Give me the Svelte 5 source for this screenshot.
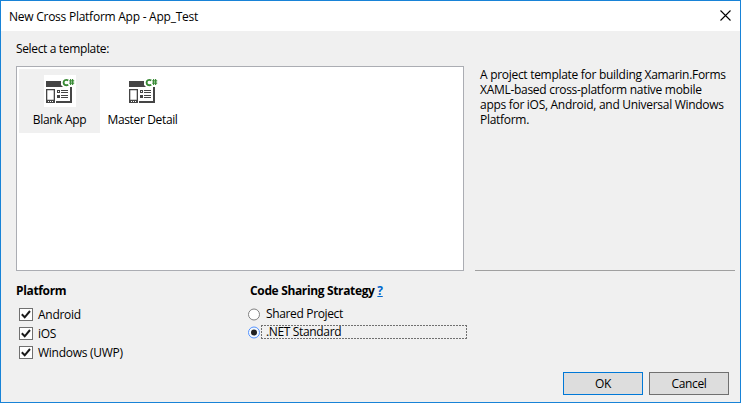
<script>
  const templates = [
    { id: 'blank', name: 'Blank App' },
    { id: 'master', name: 'Master Detail' }
  ];

  const description = [
    'A project template for building Xamarin.Forms',
    'XAML-based cross-platform native mobile',
    'apps for iOS, Android, and Universal Windows',
    'Platform.'
  ];

  let platforms = $state([
    { id: 'android', name: 'Android', checked: true },
    { id: 'ios', name: 'iOS', checked: true },
    { id: 'uwp', name: 'Windows (UWP)', checked: true }
  ]);

  const strategies = [
    { id: 'shared', name: 'Shared Project' },
    { id: 'standard', name: '.NET Standard' }
  ];

  let selectedTemplate = $state('blank');
  let strategy = $state('standard');
</script>

<div class="dialog">
  <header>
    <h1>New Cross Platform App - App_Test</h1>
    <button class="close" aria-label="Close">
      <svg width="11" height="11" viewBox="0 0 11 11">
        <path d="M0.5 0.5L10.5 10.5M10.5 0.5L0.5 10.5" stroke="#000" stroke-width="1.1" />
      </svg>
    </button>
  </header>

  <main>
    <p class="prompt">Select a template:</p>

    <div class="picker">
      <div class="templates">
        {#each templates as template}
          <button
            class="template {template.id}"
            class:selected={selectedTemplate === template.id}
            onclick={() => (selectedTemplate = template.id)}
          >
            <svg class="icon" width="32" height="32" viewBox="0 0 32 32">
              <rect width="32" height="32" fill="#fff" />
              <g fill="#454545">
                <path d="M2 6h15v4l2 2H2z" />
                <path d="M26 12h2v16H12v-2h14z" />
                <path fill-rule="evenodd" d="M2 14h9v14H2zM3.3 15.3v9.5h6.4v-9.5z" />
                <path fill-rule="evenodd" d="M13 15h3v3h-3zM14 16v1h1v-1z" />
                <path d="M13 20h3v3h-3zM17 15h7v1h-7zM17 17h7v1h-7zM17 20h7v1h-7zM17 22h7v1h-7z" />
              </g>
              <path d="M4 26h1v1H4zM6 26h1v1H6zM8 26h1v1H8z" fill="#fff" />
              <path d="M24.3 5.3C21.4 4.1 19.6 5.5 19.6 7.6S21.4 11 24.3 9.9" fill="none" stroke="#388a34" stroke-width="1.9" />
              <path d="M26.6 4v6M28.6 4v6M25.2 5.9h5M25.2 8.1h5" fill="none" stroke="#388a34" stroke-width="1.1" />
            </svg>
            <span>{template.name}</span>
          </button>
        {/each}
      </div>
      <div class="description">
        {#each description as line}
          <p>{line}</p>
        {/each}
      </div>
    </div>

    <div class="options">
      <section class="platforms">
        <h2>Platform</h2>
        {#each platforms as platform}
          <label class={platform.id}>
            <input type="checkbox" bind:checked={platform.checked} />
            <svg class="box" width="14" height="13" viewBox="0 0 14 13">
              <rect x="0.5" y="0.5" width="13" height="12" fill="#fff" stroke="#707070" />
              {#if platform.checked}
                <path d="M2.8 6.3L5.7 9.3L11 3" fill="none" stroke="#1a1a1a" stroke-width="2" />
              {/if}
            </svg>
            <span>{platform.name}</span>
          </label>
        {/each}
      </section>

      <section class="sharing">
        <h2>Code Sharing Strategy <a href="#help">?</a></h2>
        {#each strategies as item}
          <label class={item.id}>
            <input type="radio" value={item.id} bind:group={strategy} />
            <svg width="13" height="13" viewBox="0 0 13 13">
              {#if strategy === item.id}
                <circle cx="6" cy="6.5" r="5.5" fill="#f3f9ff" stroke="#5593ff" />
                <circle cx="6" cy="6.5" r="3" fill="#212121" />
              {:else}
                <circle cx="6" cy="6.5" r="5.5" fill="#fff" stroke="#808080" />
              {/if}
            </svg>
            <span class="text" class:focused={strategy === item.id}>{item.name}</span>
          </label>
        {/each}
      </section>
    </div>

    <footer>
      <button class="default">OK</button>
      <button>Cancel</button>
    </footer>
  </main>
</div>

<style>
  :global(body) {
    margin: 0;
  }

  .dialog {
    box-sizing: border-box;
    width: 741px;
    height: 403px;
    display: flex;
    flex-direction: column;
    border: 1px solid #1883d7;
    background: #f0f0f0;
    color: #000;
    font: 12px/15px "Segoe UI", "Open Sans", "Noto Sans", sans-serif;
    letter-spacing: -0.35px;
    overflow: hidden;
  }

  header {
    height: 30px;
    display: flex;
    align-items: center;
    justify-content: space-between;
    padding: 0 9px 0 8px;
    background: #fff;
  }

  h1, h2, p {
    margin: 0;
    font-size: 12px;
  }

  h1 {
    font-weight: 400;
    letter-spacing: -0.25px;
  }

  button {
    padding: 0;
    border: 0;
    background: none;
    color: inherit;
    font: inherit;
    letter-spacing: inherit;
  }

  .close {
    margin-top: -1px;
  }

  svg {
    display: block;
    flex: none;
  }

  main {
    flex: 1;
    padding: 0 5px 7px 15px;
    display: flex;
    flex-direction: column;
  }

  .prompt {
    padding: 10px 0;
  }

  .picker {
    display: flex;
    gap: 11px;
    height: 205px;
  }

  .templates {
    box-sizing: border-box;
    width: 448px;
    padding: 2px;
    display: flex;
    align-items: flex-start;
    border: 1px solid #abadb3;
    background: #fff;
  }

  .template {
    width: 81px;
    height: 64px;
    padding-top: 6px;
    display: flex;
    flex-direction: column;
    align-items: center;
    gap: 5px;
    box-sizing: border-box;
    white-space: nowrap;
  }

  .template.master {
    width: 85px;
  }

  .template.selected {
    background: #f0f0f0;
  }

  .description {
    flex: 1;
    padding: 1px 0 0 5px;
    border-bottom: 1px solid #a0a0a0;
    letter-spacing: -0.29px;
    white-space: nowrap;
  }

  .options {
    display: flex;
    padding-top: 12px;
    flex: 1;
  }

  .platforms {
    width: 234px;
  }

  h2 {
    font-weight: 700;
    margin-bottom: 7px;
  }

  h2 a {
    color: #0066cc;
  }

  label {
    display: flex;
    align-items: center;
    white-space: nowrap;
  }

  input {
    position: absolute;
    opacity: 0;
    pointer-events: none;
  }

  .platforms label {
    height: 19px;
    padding-left: 3px;
    gap: 5px;
    letter-spacing: -0.27px;
  }

  .sharing label {
    height: 18px;
    margin-left: -2px;
  }

  .text {
    box-sizing: border-box;
    width: 206px;
    height: 14px;
    line-height: 14px;
    padding-left: 5px;
  }

  /* dotted focus rectangle, 2px on and 1px off */
  .text.focused {
    background:
      repeating-linear-gradient(90deg, #707070 0 2px, transparent 2px 3px) top / 100% 1px no-repeat,
      repeating-linear-gradient(90deg, #707070 0 2px, transparent 2px 3px) bottom / 100% 1px no-repeat,
      repeating-linear-gradient(#707070 0 2px, transparent 2px 3px) left / 1px 100% no-repeat,
      repeating-linear-gradient(#707070 0 2px, transparent 2px 3px) right / 1px 100% no-repeat;
  }

  footer {
    display: flex;
    justify-content: flex-end;
    gap: 6px;
    padding-right: 6px;
  }

  footer button {
    box-sizing: border-box;
    width: 80px;
    height: 23px;
    border: 1px solid #707070;
    background: #ddd;
  }

  footer .default {
    border-color: #0078d7;
  }
</style>
